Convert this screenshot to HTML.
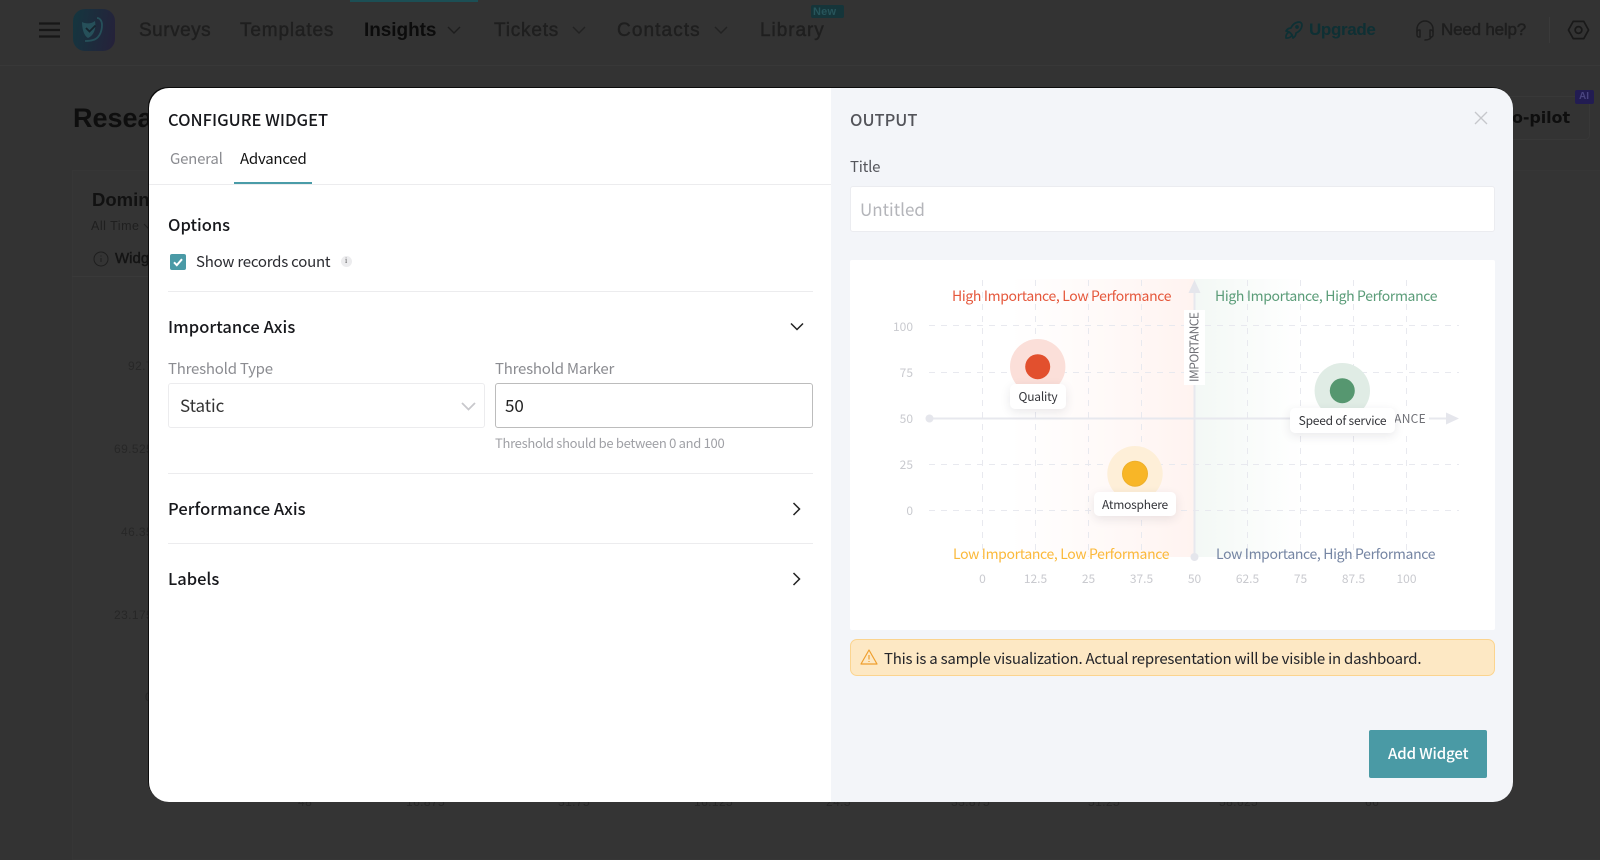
<!DOCTYPE html>
<html lang="en"><head><meta charset="utf-8"><title>Configure Widget</title>
<style>
html,body{margin:0;padding:0;width:1600px;height:846px;overflow:hidden;background:#333}
*{box-sizing:border-box}
.t{position:absolute;white-space:nowrap;line-height:20px;height:20px;font-family:"Noto Sans CJK JP","Liberation Sans",sans-serif;color:#1f2024;font-size:15px;letter-spacing:-.23px}
.n{position:absolute;white-space:nowrap;line-height:24px;height:24px;font-family:"Liberation Sans",sans-serif;font-size:19px;color:#1f1f1f;-webkit-text-stroke:.45px currentColor}
.b{position:absolute;white-space:nowrap;line-height:16px;font-family:"Liberation Sans",sans-serif;font-size:12px;color:#272727;letter-spacing:.4px}
.box{position:absolute}
.h{font-size:16.5px;font-weight:500;color:#17181c;letter-spacing:0}
.g{color:#8b8c91}
.q{font-size:14px;letter-spacing:-.35px}
svg{position:absolute;overflow:visible}
.lbl{position:absolute;background:#fff;border-radius:5px;box-shadow:0 3px 10px rgba(40,40,60,.10);text-align:center;line-height:26px;font-family:"Noto Sans CJK JP","Liberation Sans",sans-serif;font-size:12px;letter-spacing:-.22px;color:#34353a}
</style></head><body>
<!-- dimmed page -->
<div class="box" style="left:0;top:65px;width:1600px;height:1px;background:#383838"></div>
<div class="box" style="left:350px;top:0;width:128px;height:1.5px;background:#1c4f55"></div>
<svg style="left:39px;top:22px" width="22" height="16"><path d="M0 1.500h21M0 8h21M0 14.500h21" stroke="#171717" stroke-width="2.200"/></svg>
<div class="box" style="left:73px;top:9px;width:42px;height:42px;border-radius:12px;background:linear-gradient(100deg,#14363f,#26213a)"></div>
<svg style="left:73px;top:9px" width="42" height="42" viewBox="0 0 42 42" fill="none"><path d="M9 13c4 2 9 2 13-1 1 6 0 14-7 17-4-2-6-9-6-16z" fill="#26505a"/><path d="M13 19l3.500 3.500 6-6" stroke="#16242e" stroke-width="1.800"/><path d="M24 9c3 0 5 3 5 7 0 8-4 14-9 15-3 1-6 1-8 1" stroke="#26505a" stroke-width="1.800"/></svg>
<div class="n" style="left:139px;top:19px;letter-spacing:.5px">Surveys</div>
<div class="n" style="left:240px;top:19px;letter-spacing:.85px">Templates</div>
<div class="n" style="left:364px;top:19px;color:#0c0c0c;font-weight:700;-webkit-text-stroke:0;letter-spacing:-.05px">Insights</div>
<svg style="left:447px;top:26px" width="14" height="9" fill="none"><path d="M1 1l6 6 6-6" stroke="#1d1d1d" stroke-width="1.400"/></svg>
<div class="n" style="left:494px;top:19px;letter-spacing:.8px">Tickets</div>
<svg style="left:572px;top:26px" width="14" height="9" fill="none"><path d="M1 1l6 6 6-6" stroke="#222" stroke-width="1.400"/></svg>
<div class="n" style="left:617px;top:19px;letter-spacing:1.1px">Contacts</div>
<svg style="left:714px;top:26px" width="14" height="9" fill="none"><path d="M1 1l6 6 6-6" stroke="#222" stroke-width="1.400"/></svg>
<div class="n" style="left:760px;top:19px;letter-spacing:.95px">Library</div>
<div class="box" style="left:811px;top:5px;width:33px;height:13px;background:#15353a;border-radius:2px"></div>
<div class="b" style="left:813px;top:4px;font-size:11px;color:#27555b;letter-spacing:.2px;font-weight:700">New</div>
<svg style="left:1282px;top:18px" width="24" height="24" viewBox="0 0 24 24" fill="none" stroke="#0e3034" stroke-width="1.700" stroke-linecap="round" stroke-linejoin="round"><path d="M4 13a8 8 0 0 1 7 7a6 6 0 0 0 3 -5a9 9 0 0 0 6 -8a3 3 0 0 0 -3 -3a9 9 0 0 0 -8 6a6 6 0 0 0 -5 3"/><path d="M7 14a6 6 0 0 0 -3 6a6 6 0 0 0 6 -3"/><circle cx="15" cy="9" r="1"/></svg>
<div class="n" style="left:1309px;top:18px;font-size:17px;color:#0e3034;font-weight:700;-webkit-text-stroke:0;letter-spacing:-.35px">Upgrade</div>
<svg style="left:1413px;top:18px" width="24" height="24" viewBox="0 0 24 24" fill="none" stroke="#1d1d1d" stroke-width="1.500" stroke-linecap="round" stroke-linejoin="round"><path d="M4 14v-3a8 8 0 1 1 16 0v3"/><path d="M18 19c0 1.657 -2.686 3 -6 3"/><path d="M4 14a2 2 0 0 1 2 -2h1v7h-1a2 2 0 0 1 -2 -2v-3z"/><path d="M20 14a2 2 0 0 0 -2 -2h-1v7h1a2 2 0 0 0 2 -2v-3z"/></svg>
<div class="n" style="left:1441px;top:18px;font-size:17px;color:#1e1e1e;letter-spacing:-.2px">Need help?</div>
<div class="box" style="left:1549px;top:17px;width:1px;height:26px;background:#3a3a3a"></div>
<svg style="left:1567px;top:18px" width="23" height="24" viewBox="0 0 24 24" fill="none" stroke="#191919" stroke-width="1.800" stroke-linejoin="round"><path d="M22.500 12L17.500 3H6.500L1.500 12L6.500 21H17.500z"/><circle cx="12" cy="12" r="3.500"/></svg>
<div class="n" style="left:73px;top:103px;font-size:27px;height:30px;line-height:30px;color:#0e0e0e;font-weight:700;-webkit-text-stroke:0">Resear</div>
<div class="box" style="left:1490px;top:96px;width:100px;height:44px;border:1px solid #383838;border-radius:5px"></div>
<div class="n" style="right:30px;top:106px;font-family:'DejaVu Sans',sans-serif;font-size:16px;color:#0e0e0e;font-weight:700;-webkit-text-stroke:0;letter-spacing:-.1px">Co-pilot</div>
<div class="box" style="left:1575px;top:90px;width:19px;height:14px;background:#221c52;border-radius:2px"></div>
<div class="b" style="left:1579px;top:89px;font-size:10px;color:#4a4580;letter-spacing:0;font-weight:700">AI</div>
<div class="box" style="left:72px;top:170px;width:1530px;height:690px;background:#343434;border:1px solid #363636"></div>
<div class="box" style="left:72px;top:276px;width:100px;height:1px;background:#393939"></div>
<div class="n" style="left:92px;top:188px;font-size:18.500px;color:#111;font-weight:700;-webkit-text-stroke:0">Domine</div>
<div class="b" style="left:91px;top:218px;color:#1f1f1f;font-size:12.500px;letter-spacing:.5px">All Time</div>
<svg style="left:143px;top:223px" width="10" height="7" fill="none"><path d="M1 1l4 4 4-4" stroke="#222" stroke-width="1.200"/></svg>
<svg style="left:93px;top:251px" width="16" height="16" fill="none" stroke="#1e1e1e"><circle cx="8" cy="8" r="7"/><path d="M8 7v4M8 4.500v1"/></svg>
<div class="n" style="left:115px;top:247px;font-size:15px;color:#141414">Widg</div>
<div class="b" style="left:128px;top:358px">92.7</div>
<div class="b" style="left:114px;top:441px">69.525</div>
<div class="b" style="left:121px;top:524px">46.35</div>
<div class="b" style="left:114px;top:607px">23.175</div>
<div class="b" style="left:145px;top:689px">0</div>
<div class="b" style="left:298px;top:794px">48</div>
<div class="b" style="left:406px;top:794px">16.875</div>
<div class="b" style="left:558px;top:794px">31.75</div>
<div class="b" style="left:694px;top:794px">16.125</div>
<div class="b" style="left:826px;top:794px">24.5</div>
<div class="b" style="left:951px;top:794px">33.875</div>
<div class="b" style="left:1088px;top:794px">51.25</div>
<div class="b" style="left:1219px;top:794px">58.625</div>
<div class="b" style="left:1365px;top:794px">66</div>

<!-- modal -->
<div class="box" style="left:149px;top:88px;width:1364px;height:714px;border-radius:20px;background:linear-gradient(90deg,#fff 0,#fff 682px,#f3f5f9 682px);box-shadow:-1px -1px 0 #0c0c0c"></div>
<div class="t" style="left:168px;top:109px;font-size:16.500px;color:#17181c;font-weight:500;letter-spacing:0">CONFIGURE WIDGET</div>
<div class="t g" style="left:170px;top:149px">General</div>
<div class="t" style="left:240px;top:149px;color:#111">Advanced</div>
<div class="box" style="left:149px;top:184px;width:682px;height:1px;background:#ececee"></div>
<div class="box" style="left:234px;top:182px;width:78px;height:2px;background:#4a9ca8"></div>

<div class="t h" style="left:168px;top:214px">Options</div>
<div class="box" style="left:170px;top:254px;width:16px;height:16px;background:#4a9aa6;border-radius:2px"></div>
<svg style="left:170px;top:254px" width="16" height="16" fill="none"><path d="M4 8.300l2.800 2.900L12 5.200" stroke="#fff" stroke-width="2"/></svg>
<div class="t" style="left:196px;top:252px;color:#2a2b30">Show records count</div>
<div class="box" style="left:341px;top:256px;width:11px;height:11px;border-radius:50%;background:#ececee"></div>
<div class="t" style="left:345px;top:251px;font-size:8px;color:#555;font-family:'Liberation Serif',serif;letter-spacing:0">i</div>
<div class="box" style="left:168px;top:291px;width:645px;height:1px;background:#ececee"></div>
<div class="t h" style="left:168px;top:316px;letter-spacing:.05px">Importance Axis</div>
<svg style="left:790px;top:322px" width="14" height="9" fill="none"><path d="M1 1.500l6 6 6-6" stroke="#222" stroke-width="1.500"/></svg>
<div class="t g" style="left:168px;top:359px">Threshold Type</div>
<div class="t g" style="left:495px;top:359px">Threshold Marker</div>
<div class="box" style="left:168px;top:383px;width:317px;height:45px;border:1px solid #ececee;border-radius:3px"></div>
<div class="t" style="left:180px;top:395px;font-size:17px;color:#333;letter-spacing:-.1px">Static</div>
<svg style="left:461px;top:402px" width="15" height="9" fill="none"><path d="M1 1l6.500 6.500L14 1" stroke="#c8c8cc" stroke-width="1.800"/></svg>
<div class="box" style="left:495px;top:383px;width:318px;height:45px;border:1px solid #bcbcbc;border-radius:3px"></div>
<div class="t" style="left:505px;top:395px;font-size:17px;color:#222;letter-spacing:0">50</div>
<div class="t" style="left:495px;top:433px;font-size:13px;color:#a0a1a6;letter-spacing:-.3px">Threshold should be between 0 and 100</div>
<div class="box" style="left:168px;top:473px;width:645px;height:1px;background:#ececee"></div>
<div class="t h" style="left:168px;top:498px;letter-spacing:.05px">Performance Axis</div>
<svg style="left:792px;top:502px" width="9" height="14" fill="none"><path d="M1.500 1l6 6-6 6" stroke="#222" stroke-width="1.500"/></svg>
<div class="box" style="left:168px;top:543px;width:645px;height:1px;background:#ececee"></div>
<div class="t h" style="left:168px;top:568px">Labels</div>
<svg style="left:792px;top:572px" width="9" height="14" fill="none"><path d="M1.500 1l6 6-6 6" stroke="#222" stroke-width="1.500"/></svg>

<!-- output -->
<div class="t" style="left:850px;top:109px;font-size:16.500px;font-weight:500;color:#53545a;letter-spacing:0">OUTPUT</div>
<svg style="left:1474px;top:111px" width="14" height="14" fill="none"><path d="M1 1l12 12M13 1L1 13" stroke="#c6c7cc" stroke-width="1.300"/></svg>
<div class="t" style="left:850px;top:157px;color:#55565c">Title</div>
<div class="box" style="left:850px;top:186px;width:645px;height:46px;background:#fff;border:1px solid #ebecf0;border-radius:3px"></div>
<div class="t" style="left:860px;top:199px;font-size:17px;color:#b4b5ba;letter-spacing:0">Untitled</div>
<div class="box" style="left:850px;top:260px;width:645px;height:370px;background:#fff;border-radius:2px"></div>

<svg style="left:0;top:0" width="1600" height="846" viewBox="0 0 1600 846" fill="none">
<defs>
<linearGradient id="rg" x1="0" x2="1" y1="0" y2="0"><stop offset="0" stop-color="#fff5f3" stop-opacity="0"/><stop offset="1" stop-color="#fff3f0"/></linearGradient>
<linearGradient id="gg" x1="0" x2="1" y1="0" y2="0"><stop offset="0" stop-color="#f3f8f5"/><stop offset="1" stop-color="#f3f8f5" stop-opacity="0"/></linearGradient>
</defs>
<rect x="1010" y="279" width="184" height="278" fill="url(#rg)"/>
<rect x="1194" y="279" width="110" height="278" fill="url(#gg)"/>
<g stroke="#e8e9ef" stroke-width="1" stroke-dasharray="6 6">
<path d="M929 325.500H1459M929 372.500H1459M929 464.500H1459M929 510.500H1459"/>
<path d="M982.500 280V557M1035.500 280V557M1088.500 280V557M1141.500 280V557M1247.500 280V557M1300.500 280V557M1353.500 280V557M1406.500 280V557"/>
</g>
<path d="M929 418.500H1448M1194.500 290V557" stroke="#e7e8ee" stroke-width="2"/>
<circle cx="929.500" cy="418.500" r="4" fill="#e5e6ec"/>
<circle cx="1194.500" cy="557" r="4" fill="#e5e6ec"/>
<path d="M1194.500 280l6 13h-12zM1459 418.500l-13 6v-12z" fill="#e5e6ec"/>
<rect x="1184" y="310" width="21" height="75" fill="#fff"/>
<rect x="1300" y="408" width="129" height="22" fill="#fff"/>
<text transform="translate(1198.500 382) rotate(-90)" font-family="Noto Sans CJK JP,Liberation Sans,sans-serif" font-size="12" fill="#6f7076" textLength="70">IMPORTANCE</text>
<text x="1426" y="423" text-anchor="end" font-family="Noto Sans CJK JP,Liberation Sans,sans-serif" font-size="12" letter-spacing=".3" fill="#6f7076">PERFORMANCE</text>
<circle cx="1037.700" cy="366.700" r="27.700" fill="#fbdfd9"/><circle cx="1037.700" cy="366.700" r="12.500" fill="#e2502e"/>
<circle cx="1135" cy="473.700" r="27.700" fill="#feefd8"/><circle cx="1135" cy="473.700" r="12.500" fill="#f8b627" stroke="#eeb02a"/>
<circle cx="1342.300" cy="390.700" r="27.700" fill="#e0ece5"/><circle cx="1342.300" cy="390.700" r="12.500" fill="#569770"/>
<g font-family="Noto Sans CJK JP,Liberation Sans,sans-serif" font-size="12" fill="#c9cacf" text-anchor="end">
<text x="913" y="331">100</text><text x="913" y="377">75</text><text x="913" y="423">50</text><text x="913" y="469">25</text><text x="913" y="515">0</text>
</g>
<g font-family="Noto Sans CJK JP,Liberation Sans,sans-serif" font-size="12" fill="#c9cacf" text-anchor="middle">
<text x="982.500" y="583">0</text><text x="1035.500" y="583">12.5</text><text x="1088.500" y="583">25</text><text x="1141.500" y="583">37.5</text><text x="1194.500" y="583">50</text><text x="1247.500" y="583">62.5</text><text x="1300.500" y="583">75</text><text x="1353.500" y="583">87.5</text><text x="1406.500" y="583">100</text>
</g>
</svg>
<div class="t q" style="left:952px;top:286px;color:#e5573b">High Importance, Low Performance</div>
<div class="t q" style="left:1215px;top:286px;color:#5a9c78">High Importance, High Performance</div>
<div class="t q" style="left:953px;top:544px;color:#fbb93a">Low Importance, Low Performance</div>
<div class="t q" style="left:1216px;top:544px;color:#7585a3">Low Importance, High Performance</div>
<div class="lbl" style="left:1010px;top:384px;width:56px;height:25px">Quality</div>
<div class="lbl" style="left:1094px;top:492px;width:82px;height:24px">Atmosphere</div>
<div class="lbl" style="left:1290px;top:408px;width:105px;height:25px">Speed of service</div>

<div class="box" style="left:850px;top:639px;width:645px;height:37px;background:#fde8c4;border:1px solid #fbd48f;border-radius:7px"></div>
<svg style="left:860px;top:649px" width="18" height="16" viewBox="0 0 18 16" fill="none" stroke="#ef9f2e" stroke-width="1.200" stroke-linejoin="round"><path d="M9 1L17 15H1z"/><path d="M9 6v4.500M9 12v1"/></svg>
<div class="t" style="left:884px;top:649px;color:#24252a">This is a sample visualization. Actual representation will be visible in dashboard.</div>
<div class="box" style="left:1369px;top:730px;width:118px;height:48px;background:#4a9aa5;border-radius:2px"></div>
<div class="t" style="left:1388px;top:744px;font-size:15px;font-weight:500;color:#fff;letter-spacing:-.1px">Add Widget</div>
</body></html>
